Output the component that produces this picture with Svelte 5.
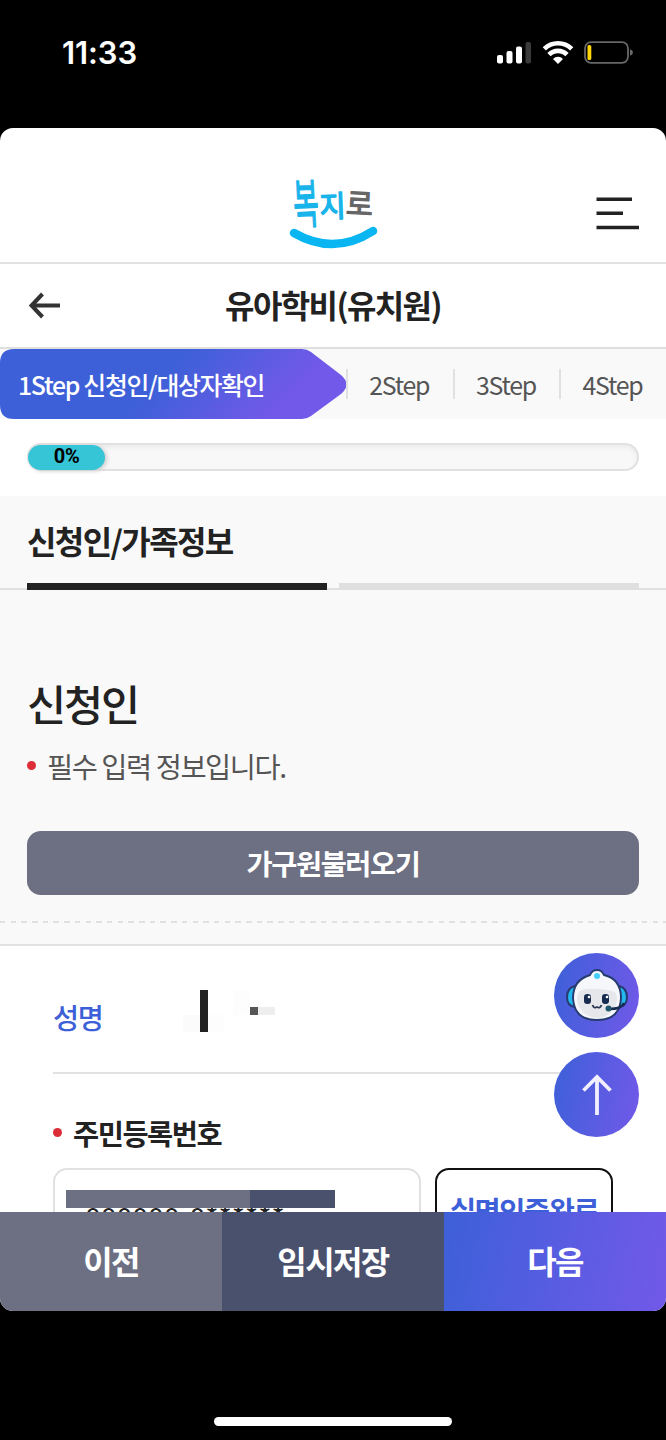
<script lang="ts">
  let progress = 0;
  let steps = ["2Step", "3Step", "4Step"];
  let name = "";
  let idNumber = "000000-0******";

  // blocks that hide the applicant's name
  let nameMask = [
    { x: 0, y: 25, w: 17, h: 17, fill: "#fbfbfb" },
    { x: 17, y: 0, w: 8, h: 42, fill: "#222222" },
    { x: 25, y: 25, w: 16, h: 17, fill: "#fdfdfd" },
    { x: 50, y: 0, w: 17, h: 25, fill: "#fdfdfd" },
    { x: 67, y: 17, w: 8, h: 8, fill: "#565656" },
    { x: 75, y: 17, w: 17, h: 8, fill: "#eeeeee" },
  ];
</script>

<main>
  <div class="status">
    <span class="time">11:33</span>
    <svg class="indicators" width="138" height="28" viewBox="0 0 138 28">
      <rect x="1" y="17" width="6" height="8.5" rx="2" fill="#fff" />
      <rect x="10.5" y="13" width="6" height="12.5" rx="2" fill="#fff" />
      <rect x="20" y="8.5" width="6" height="17" rx="2" fill="#fff" />
      <rect x="29.5" y="4" width="5.5" height="21.5" rx="2" fill="#3a3a3a" />
      <g fill="none" stroke="#fff" stroke-width="4.6">
        <path d="M48.3 10.8A19.5 19.5 0 0 1 75.7 10.8" />
        <path d="M53 16.7A12.5 12.5 0 0 1 71 16.7" />
      </g>
      <path d="M57 21a6.8 6.8 0 0 1 10 0L62 26z" fill="#fff" />
      <rect
        x="89"
        y="4.2"
        width="43"
        height="20.6"
        rx="6"
        fill="none"
        stroke="#676767"
        stroke-width="1.8"
      />
      <path d="M134 11.2q3 1 3 3.3t-3 3.3z" fill="#676767" />
      <rect x="91.5" y="7" width="3.8" height="15" rx="1.6" fill="#ffd60a" />
    </svg>
  </div>

  <div class="sheet">
    <header>
      <svg class="logo" width="92" height="72" viewBox="0 0 92 72">
        <g text-anchor="middle" stroke-linejoin="round">
          <text
            transform="translate(20 44) rotate(-3) scale(.84 1.6)"
            font-size="33"
            fill="#18b4ea"
            stroke="#18b4ea"
            stroke-width="1">복</text
          >
          <text
            transform="translate(46 38) rotate(-2) scale(.94 1)"
            font-size="30"
            fill="#18b4ea"
            stroke="#18b4ea"
            stroke-width="1.5">지</text
          >
          <text
            transform="translate(72 36) rotate(3) scale(.98 1)"
            font-size="30"
            fill="#666"
            stroke="#666"
            stroke-width="1.2">로</text
          >
        </g>
        <path
          d="M7 54Q47 77 86 52"
          fill="none"
          stroke="#09b6f2"
          stroke-width="8.5"
          stroke-linecap="round"
        />
      </svg>
      <svg class="menu" width="44" height="34" viewBox="0 0 44 34">
        <path
          d="M1.5 2.2H37M1.5 16.3H28M1.5 30.5H44"
          stroke="#222"
          stroke-width="3.6"
        />
      </svg>
    </header>

    <div class="title-bar">
      <svg class="back" width="32" height="28" viewBox="0 0 32 28">
        <path
          d="M13.5 2L2.5 13.5L13.5 25M2.5 13.5H31"
          fill="none"
          stroke="#333"
          stroke-width="4"
        />
      </svg>
      <h1>유아학비(유치원)</h1>
    </div>

    <div class="steps">
      <div class="current">
        <svg width="348" height="71" viewBox="0 0 348 71">
          <defs>
            <linearGradient id="step-fill" x1="0" y1="0.4" x2="1" y2="0.6">
              <stop offset="0.45" stop-color="#3d60d8" />
              <stop offset="0.85" stop-color="#7259e9" />
            </linearGradient>
          </defs>
          <path
            d="M14 0H302Q307 0 311 3L341 26Q352 35.500 341 45L311 67Q307 70 302 70H14Q0 70 0 56V14Q0 0 14 0z"
            fill="url(#step-fill)"
          />
        </svg>
        <span>1Step 신청인/대상자확인</span>
      </div>
      {#each steps as step}
        <div class="step">{step}</div>
      {/each}
    </div>

    <div class="progress">
      <div class="track">
        <div class="bar" style="width: {Math.max(progress, 12.7)}%">
          {progress}%
        </div>
      </div>
    </div>

    <div class="tabs">
      <div class="tab active">신청인/가족정보</div>
      <div class="tab"></div>
    </div>

    <section class="applicant">
      <h2>신청인</h2>
      <p><i class="dot"></i>필수 입력 정보입니다.</p>
      <button class="load">가구원불러오기</button>
      <div class="dashes"></div>
    </section>

    <section class="form">
      <div class="row">
        <span class="label">성명</span>
        <span>{name}</span>
        <svg width="92" height="42" viewBox="0 0 92 42">
          {#each nameMask as b}
            <rect x={b.x} y={b.y} width={b.w} height={b.h} fill={b.fill} />
          {/each}
        </svg>
      </div>
      <div class="field-label"><i class="dot"></i>주민등록번호</div>
      <div class="fields">
        <div class="input">
          <span>{idNumber}</span>
          <div class="mask"></div>
        </div>
        <div class="verified">실명인증완료</div>
      </div>
    </section>

    <div class="floating">
      <div class="round">
        <svg width="64" height="54" viewBox="0 0 64 54">
          <g stroke="#263c70" stroke-width="2">
            <path d="M10 17Q2 19 2 28T10 38z" fill="#22b7ee" />
            <path d="M54 17Q62 19 62 28T54 38z" fill="#22b7ee" />
            <path
              d="M25 6Q27 1 32 1T39 6Q56 10 56 29Q55 51 32 51T8 29Q8 11 25 6z"
              fill="#f6f7fa"
            />
          </g>
          <path
            d="M14 23Q17 19 32 20T50 23Q54 29 50 38Q43 49 32 49T14 38Q10 30 14 23z"
            fill="#e5e7ea"
          />
          <circle cx="32" cy="7" r="3" fill="#42cdfa" />
          <rect x="19" y="25" width="7" height="10" rx="3.2" fill="#172b51" />
          <rect x="37" y="25" width="7" height="10" rx="3.2" fill="#172b51" />
          <circle cx="24" cy="28" r="1.3" fill="#fff" />
          <circle cx="42" cy="28" r="1.3" fill="#fff" />
          <path
            d="M27.5 36Q29 40 32 38Q35 40 36.500 36"
            fill="none"
            stroke="#283853"
            stroke-width="1.8"
          />
          <path
            d="M59 34Q57 40 44 40"
            fill="none"
            stroke="#172b51"
            stroke-width="2.4"
          />
          <circle cx="43.5" cy="39.5" r="3" fill="#20556b" />
        </svg>
      </div>
      <div class="round">
        <svg width="30" height="42" viewBox="0 0 30 42">
          <path
            d="M1.5 16.5L15 3L28.5 16.5M15 3V41"
            fill="none"
            stroke="#f1efff"
            stroke-width="3.8"
          />
        </svg>
      </div>
    </div>

    <footer>
      <button class="prev">이전</button>
      <button class="save">임시저장</button>
      <button class="next">다음</button>
    </footer>
  </div>

  <div class="home"></div>
</main>

<style>
  :global(body) {
    background: #000;
  }

  * {
    box-sizing: border-box;
    letter-spacing: -0.05em;
  }

  main {
    width: 666px;
    height: 1440px;
    overflow: hidden;
    background: #000;
    color: #222;
    font-family: "Noto Sans CJK KR", sans-serif;
  }

  h1,
  h2,
  p {
    margin: 0;
  }

  button {
    border: 0;
    padding: 0;
    color: #fff;
    font: inherit;
  }

  .status {
    display: flex;
    justify-content: space-between;
    height: 128px;
    padding: 38px 32px 0 62px;
    color: #fff;
  }

  .time {
    font: 600 31px/30px Inter, sans-serif;
    letter-spacing: -0.1px;
  }

  .sheet {
    position: relative;
    height: 1183px;
    overflow: hidden;
    border-radius: 13px;
    background: #fff;
  }

  header {
    display: flex;
    justify-content: flex-end;
    height: 136px;
    padding: 51px 27px 0 0;
    border-bottom: 2px solid #e1e1e1;
  }

  .logo {
    margin-right: 216px;
    overflow: visible;
  }

  .logo text {
    letter-spacing: 0;
  }

  .menu {
    margin-top: 18px;
  }

  .title-bar {
    display: flex;
    align-items: center;
    height: 85px;
    padding: 0 29px;
    border-bottom: 2px solid #dfdfdf;
  }

  .title-bar h1 {
    flex: 1;
    margin: -3px 32px 0 0;
    text-align: center;
    font-size: 32px;
    font-weight: 700;
    line-height: 1;
  }

  .steps {
    display: flex;
    align-items: center;
    height: 70px;
    background: #f9f9f9;
    font-size: 24.9px;
  }

  .current {
    display: grid;
    align-items: center;
    width: 346px;
    height: 71px;
    color: #fff;
  }

  .current > * {
    grid-area: 1 / 1;
  }

  .current span {
    padding-left: 18px;
    font-weight: 500;
    letter-spacing: -0.054em;
    line-height: 36px;
  }

  .step {
    width: 106.6px;
    height: 30px;
    padding-right: 2px;
    border-left: 2px solid #e1e1e1;
    color: #555;
    line-height: 30px;
    text-align: center;
  }

  .progress {
    height: 77px;
    padding: 24px 27px 0;
  }

  .track {
    height: 28px;
    border: 2px solid #e1e1e1;
    border-radius: 14px;
    background: #f8f8f8;
    box-shadow: inset 0 3px 4px #ececec;
  }

  .bar {
    height: 25px;
    margin-left: -1px;
    border-radius: 13px;
    background: #35c5d6;
    box-shadow: 2px 1px 4px #ccc;
    color: #000;
    font: 700 20px/23px Roboto, sans-serif;
    letter-spacing: -0.2px;
    text-align: center;
  }

  .tabs {
    display: flex;
    gap: 12px;
    height: 94px;
    padding: 0 27px;
    background: linear-gradient(#e1e1e1, #e1e1e1) 0 92px / 100% 2px no-repeat #f9f9f9;
  }

  .tab {
    flex: 1;
    border-bottom: 7px solid #dfdfdf;
    font-size: 32px;
    font-weight: 700;
    line-height: 88px;
    white-space: nowrap;
  }

  .active {
    border-color: #222;
  }

  .applicant {
    height: 356px;
    padding: 85px 27px 0;
    border-bottom: 2px solid #e1e1e1;
    background: #f9f9f9;
  }

  .applicant h2 {
    font-size: 42.6px;
    font-weight: 500;
    line-height: 56px;
  }

  .applicant p {
    display: flex;
    align-items: center;
    height: 68px;
    color: #555;
    font-size: 28.4px;
  }

  .dot {
    width: 9px;
    height: 9px;
    margin-right: 11px;
    border-radius: 50%;
    background: #dc2d38;
  }

  .load {
    display: block;
    width: 612px;
    height: 64px;
    margin-top: 32px;
    padding-bottom: 2px;
    border-radius: 14px;
    background: #6d6f82;
    font-size: 28.4px;
    font-weight: 700;
  }

  .dashes {
    height: 2px;
    margin: 26px -27px 0;
    background: repeating-linear-gradient(90deg, #e1e1e1 0 5.5px, #f9f9f9 5.5px 10.7px);
  }

  .form {
    padding: 0 53px;
    font-size: 28.4px;
  }

  .row {
    display: flex;
    height: 128px;
    padding-top: 44px;
    border-bottom: 2px solid #e1e1e1;
  }

  .label {
    width: 130px;
    color: #3d60d8;
    font-weight: 500;
    line-height: 54px;
  }

  .field-label {
    display: flex;
    align-items: center;
    height: 94px;
    padding-top: 23px;
    font-weight: 700;
  }

  .fields {
    display: flex;
    gap: 14px;
  }

  .input {
    display: grid;
    width: 368px;
    height: 82px;
    border: 2px solid #e1e1e1;
    border-radius: 14px;
  }

  .input > * {
    grid-area: 1 / 1;
  }

  .input span {
    padding-left: 30px;
    letter-spacing: 0;
    line-height: 92px;
  }

  .mask {
    width: 269px;
    height: 18px;
    margin: 20px 0 0 11px;
    background: linear-gradient(90deg, #6d6f82 184px, #4a516d 184px);
  }

  .verified {
    width: 178px;
    height: 82px;
    border: 2px solid #111;
    border-radius: 14px;
    color: #3d60d8;
    font-weight: 700;
    line-height: 79px;
    text-align: center;
  }

  .floating {
    position: absolute;
    top: 825px;
    right: 27px;
    display: grid;
    gap: 14px;
  }

  .round {
    display: grid;
    place-items: center;
    width: 85px;
    height: 85px;
    border-radius: 50%;
    background: linear-gradient(100deg, #3d60d8, #7259e9);
  }

  footer {
    position: absolute;
    bottom: 0;
    left: 0;
    display: grid;
    grid-template-columns: repeat(3, 1fr);
    width: 100%;
    height: 99px;
    font-size: 32px;
    font-weight: 700;
  }

  footer button {
    padding-bottom: 3px;
  }

  .prev {
    background: #6d6f82;
  }

  .save {
    background: #4a516d;
  }

  .next {
    background: linear-gradient(100deg, #3d60d8, #7259e9);
  }

  .home {
    width: 238px;
    height: 9px;
    margin: 106px auto 0;
    border-radius: 5px;
    background: #fff;
  }
</style>
